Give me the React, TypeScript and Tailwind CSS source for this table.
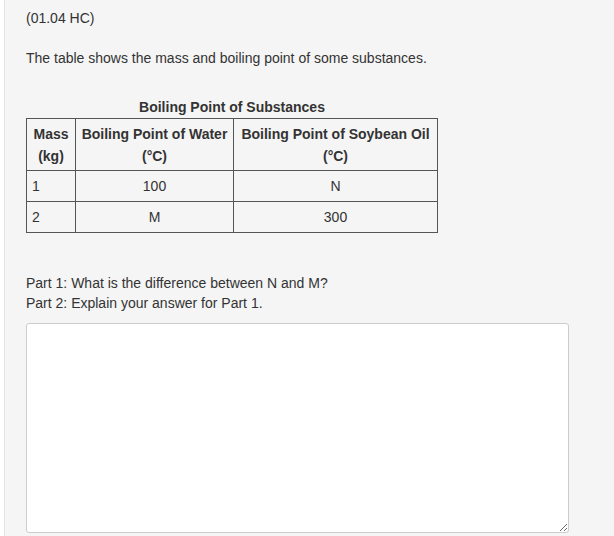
export default function App() {
  const cell = "border border-solid border-[#555]"
  return (
    <div className="min-h-[536px] bg-white font-['Liberation_Sans',Arial,sans-serif] text-[#333]">
      <div className="ml-[4px] min-h-[536px] border-l border-[#e3e3e3] bg-[#f5f5f5] pl-[21px] pt-[8px]">
        <p className="text-[14px] leading-[20px]">(01.04 HC)</p>
        <p className="mt-[20px] text-[14px] leading-[20px]">
          The table shows the mass and boiling point of some substances.
        </p>

        <table className="mt-[30px] border-collapse text-[14px] leading-[18px]">
          <caption className="pb-[2px] pt-[1px] text-center font-bold leading-[17px]">Boiling Point of Substances</caption>
          <thead>
            <tr className="h-[52px] leading-[22px]">
              <th className={`${cell} w-[49px] px-[4px] text-center font-bold`}>
                Mass
                <br />
                (kg)
              </th>
              <th className={`${cell} w-[158px] px-[4px] text-center font-bold`}>
                Boiling Point of Water
                <br />
                (°C)
              </th>
              <th className={`${cell} w-[204px] px-[4px] text-center font-bold`}>
                Boiling Point of Soybean Oil
                <br />
                (°C)
              </th>
            </tr>
          </thead>
          <tbody>
            <tr className="h-[31px]">
              <td className={`${cell} px-[5px]`}>1</td>
              <td className={`${cell} text-center`}>100</td>
              <td className={`${cell} text-center`}>N</td>
            </tr>
            <tr className="h-[31px]">
              <td className={`${cell} px-[5px]`}>2</td>
              <td className={`${cell} text-center`}>M</td>
              <td className={`${cell} text-center`}>300</td>
            </tr>
          </tbody>
        </table>

        <p className="mt-[40px] text-[14px] leading-[20px]">Part 1: What is the difference between N and M?</p>
        <p className="text-[14px] leading-[20px]">Part 2: Explain your answer for Part 1.</p>

        <textarea className="mt-[10px] block h-[210px] w-[543px] rounded-[3px] border border-[#ccc] bg-white p-2 text-[14px] outline-none" />
      </div>
    </div>
  )
}
